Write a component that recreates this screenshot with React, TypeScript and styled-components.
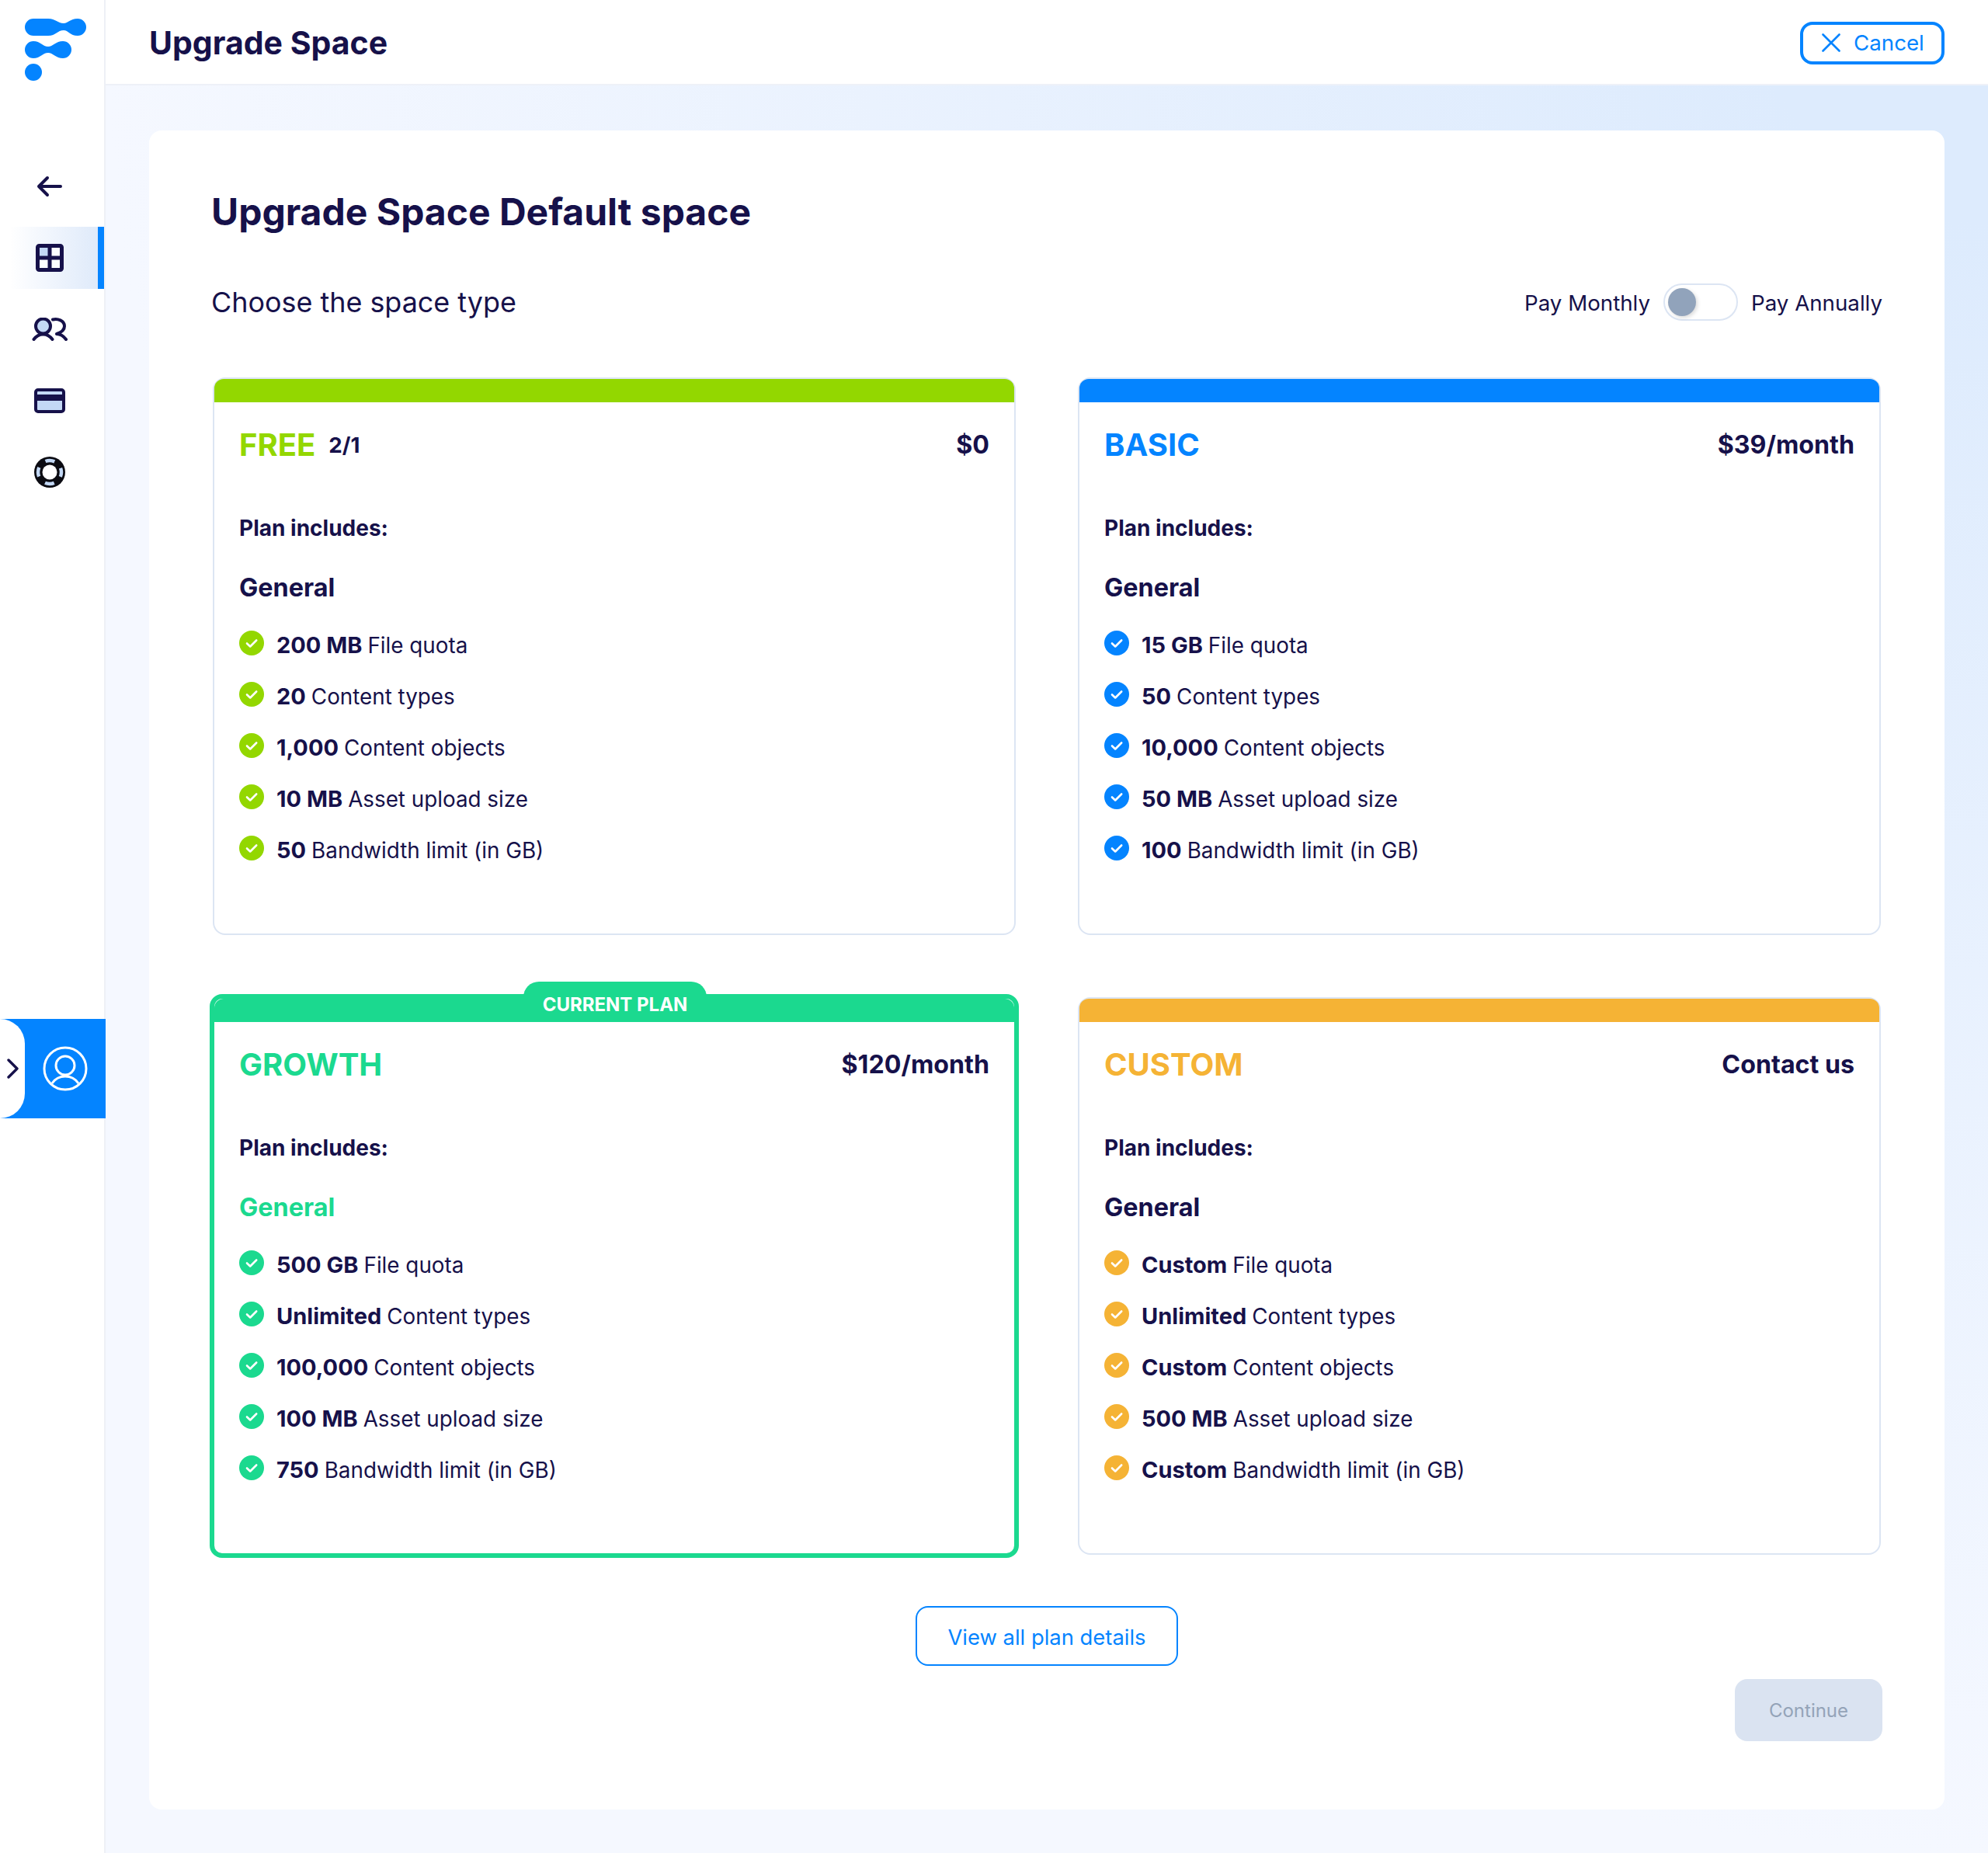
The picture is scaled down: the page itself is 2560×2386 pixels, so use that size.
import React from "react";
import styled, { createGlobalStyle } from "styled-components";

const Global = createGlobalStyle`
  html, body { margin: 0; padding: 0; background: #f5f8ff; }
  body { font-family: Inter, "Liberation Sans", sans-serif; color: #16114a; }
  * { box-sizing: border-box; }
`;

const Page = styled.div`
  display: flex; width: 2560px; height: 2386px;
`;
const Sidebar = styled.aside`
  position: relative; width: 136px; flex: none; background: #fff; border-right: 2px solid #eef0f6;
  display: flex; flex-direction: column;
`;
const LogoBox = styled.div`height: 200px; flex: none; line-height: 0;`;
const Nav = styled.nav`display: flex; flex-direction: column; gap: 12px;`;
const NavItem = styled.div<{ $active?: boolean }>`
  height: 80px; display: flex; align-items: center; justify-content: center; padding-right: 6px;
  ${p => p.$active ? `background: linear-gradient(90deg, #ffffff 10%, #dfeafa 100%); border-right: 8px solid #0484ff; padding-right: 0; padding-left: 2px;` : ""}
`;
const ProfileTab = styled.div`
  position: absolute; left: 0; top: 1312px; width: 136px; height: 128px; background: #0484ff;
  display: flex; align-items: center;
`;
const TabHandle = styled.div`
  width: 32px; height: 128px; background: #fff; border-radius: 0 32px 32px 0;
  display: flex; align-items: center; justify-content: center; padding-left: 2px;
`;
const ProfileIcon = styled.div`margin-left: 23px; line-height: 0;`;

const Main = styled.div`
  flex: 1; min-width: 0; display: flex; flex-direction: column;
  background: radial-gradient(ellipse 100% 100% at 100% 0, #ddebfd 12%, #f5f8ff 100%);
`;
const Header = styled.header`
  height: 110px; flex: none; background: #fff; box-shadow: inset 0 -2px 0 #eef1f8;
  display: flex; align-items: center; justify-content: space-between; padding: 0 56px;
`;
const HeaderTitle = styled.h1`margin: 0; font-size: 41px; font-weight: 700; color: #16114a;`;
const CancelButton = styled.button`
  width: 186px; height: 55px; border: 4px solid #0484ff; border-radius: 16px; background: #fff;
  color: #0484ff; font: 400 27.7px Inter, sans-serif; display: flex; align-items: center; gap: 17px; padding: 0 0 0 24px;
`;
const PanelWrap = styled.div`padding: 58px 56px 56px;`;
const Panel = styled.section`
  height: 2162px; background: #fff; border-radius: 16px; padding: 0 80px;
  display: flex; flex-direction: column;
`;
const PageTitle = styled.h2`
  margin: 76px 0 0; height: 58px; line-height: 58px; font-size: 48px; font-weight: 700; color: #16114a;
`;
const ChooseRow = styled.div`
  margin-top: 57px; height: 60px; display: flex; align-items: center; justify-content: space-between;
`;
const Choose = styled.div`font-size: 35.9px; font-weight: 400; color: #16114a;`;
const Billing = styled.div`
  display: flex; align-items: center; gap: 17px; font-size: 27.7px; color: #16114a;
  span { padding-top: 2px; }
`;
const Toggle = styled.div`
  width: 96px; height: 48px; border: 2px solid #dce5f3; border-radius: 24px; padding: 4px; background: #fff;
`;
const Knob = styled.div`
  width: 36px; height: 36px; border-radius: 50%; background: #91a3bb; box-shadow: 2px 2px 5px rgba(0,0,0,.15);
`;
const Grid = styled.div`
  margin-top: 67px; padding: 0 2px; display: grid; grid-template-columns: 1034px 1034px; grid-auto-rows: 718px; gap: 80px;
`;
const Card = styled.article<{ $featured?: boolean; $color: string }>`
  position: relative; display: flex; flex-direction: column; background: #fff;
  border: ${p => p.$featured ? `6px solid ${p.$color}` : "2px solid #dce5f3"};
  border-radius: 16px;
  margin: ${p => p.$featured ? "-4px" : "0"};
`;
const Band = styled.div<{ $color: string }>`
  height: 30px; flex: none; background: ${p => p.$color}; border-radius: 12px 12px 0 0;
`;
const Badge = styled.div<{ $color: string }>`
  position: absolute; left: 398px; top: -22px; width: 236px; height: 52px; padding-top: 15px; text-align: center;
  background: ${p => p.$color}; border-radius: 20px 20px 0 0; color: #fff; font-size: 24px; font-weight: 700; line-height: 29px;
`;
const CardBody = styled.div`padding: 32px 32px 0; display: flex; flex-direction: column;`;
const CardHead = styled.div`height: 44px; display: flex; align-items: center; justify-content: space-between;`;
const PlanName = styled.div`display: flex; align-items: center; gap: 17px;`;
const Name = styled.span<{ $color: string }>`font-size: 40px; font-weight: 700; color: ${p => p.$color};`;
const Count = styled.span`font-size: 27.7px; font-weight: 700; color: #16114a; margin-top: 2px;`;
const Price = styled.div`font-size: 32.2px; font-weight: 700; color: #16114a;`;
const Includes = styled.div`margin-top: 68px; height: 36px; line-height: 36px; font-size: 28px; font-weight: 700;`;
const Section = styled.div<{ $color?: string }>`
  margin-top: 38px; height: 40px; line-height: 42px; font-size: 32.4px; font-weight: 700; color: ${p => p.$color || "#16114a"};
`;
const List = styled.ul`margin: 19px 0 0; padding: 0; list-style: none;`;
const Item = styled.li`
  height: 66px; display: flex; align-items: center; gap: 16px; font-size: 27.8px; font-weight: 400;
  span { padding-top: 4px; }
  b { font-size: 29px; font-weight: 650; margin-right: 7px; }
`;
const ViewRow = styled.div`margin-top: 66px; display: flex; justify-content: center;`;
const ViewButton = styled.button`
  width: 338px; height: 77px; border: 2px solid #0484ff; border-radius: 16px; background: #fff;
  color: #0484ff; font: 400 27.4px Inter, sans-serif; padding: 2px 0 0;
`;
const ContinueRow = styled.div`margin-top: 17px; display: flex; justify-content: flex-end;`;
const ContinueButton = styled.button`
  width: 190px; height: 80px; border: 0; border-radius: 16px; background: #dae3f1; color: #94a3b8;
  font: 400 24px Inter, sans-serif; padding: 0;
`;

const Check = ({ color }: { color: string }) => (
  <svg width="32" height="32" viewBox="0 0 32 32" style={{ flex: "none" }}>
    <circle cx="16" cy="16" r="16" fill={color} />
    <path d="M10 16.5l4.2 4 8-8" fill="none" stroke="#fff" strokeWidth="2.6" strokeLinecap="round" strokeLinejoin="round" />
  </svg>
);

const Logo = () => (
  <svg width="136" height="120" viewBox="0 0 136 120" fill="#0484ff">
    <path d="M43 24H62C72 24 74 30 82 30C88 30 90 24 100 24A11 11 0 0 1 100 46C90 46 88 39 82 39C74 39 72 46 62 46H43A11 11 0 0 1 43 24Z" />
    <path d="M43 53C52 53 55 60 62 60C68 60 72 53 81 53A11 11 0 0 1 81 75C72 75 68 68 62 68C55 68 52 75 43 75A11 11 0 0 1 43 53Z" />
    <ellipse cx="43" cy="93" rx="11" ry="11" />
  </svg>
);

const ink = "#16114a";
const tint = "#c3d8f5";

const ArrowIcon = () => (
  <svg width="34" height="28" viewBox="0 0 34 28" fill="none" stroke={ink} strokeWidth="4" strokeLinecap="round" strokeLinejoin="round">
    <path d="M31 14H3M14 3L3 14l11 11" />
  </svg>
);
const GridIcon = () => (
  <svg width="36" height="36" viewBox="0 0 36 36">
    <rect x="2" y="2" width="32" height="32" rx="2" fill="#fff" fillOpacity=".75" />
    <rect x="2" y="2" width="16" height="16" fill={tint} />
    <path d="M4.5 2.5h27a2 2 0 0 1 2 2v27a2 2 0 0 1-2 2h-27a2 2 0 0 1-2-2v-27a2 2 0 0 1 2-2zM18 2v32M2 18h32" fill="none" stroke={ink} strokeWidth="5" />
  </svg>
);
const UsersIcon = () => (
  <svg width="46" height="30" viewBox="0 0 46 30" fill="none" stroke={ink} strokeWidth="4" strokeLinecap="round" strokeLinejoin="round">
    <circle cx="14.5" cy="11" r="9.5" fill={tint} />
    <path d="M2.5 28c3-4 7-6.5 12-6.5s9 2.5 12 6.5" />
    <path d="M27 2.5c6-1.500 15 1 15 8.500 0 5-4 8-10 10 5 0 9 3 12 7" />
  </svg>
);
const CardIcon = () => (
  <svg width="40" height="32" viewBox="0 0 40 32">
    <rect x="2" y="2" width="36" height="28" rx="3" fill={tint} stroke={ink} strokeWidth="4" />
    <rect x="2" y="8" width="36" height="8" fill={ink} />
  </svg>
);
const HelpIcon = () => (
  <svg width="40" height="40" viewBox="0 0 40 40">
    <circle cx="20" cy="20" r="20" fill="#0b0b12" />
    <circle cx="20" cy="20" r="15" fill="none" stroke={tint} strokeWidth="4.5" strokeDasharray="12 11.56" strokeDashoffset="6" />
    <circle cx="20" cy="20" r="9.5" fill="#fff" />
  </svg>
);
const Chevron = () => (
  <svg width="16" height="26" viewBox="0 0 16 26" fill="none" stroke={ink} strokeWidth="3.4" strokeLinecap="round" strokeLinejoin="round">
    <path d="M2 2l11 11L2 24" />
  </svg>
);
const ProfileGlyph = () => (
  <svg width="58" height="58" viewBox="0 0 58 58" fill="none" stroke="#fff" strokeWidth="3">
    <circle cx="29" cy="29" r="27" />
    <circle cx="29" cy="25" r="12" />
    <path d="M12 48c4-6 10-9 17-9s13 3 17 9" />
  </svg>
);
const CloseIcon = () => (
  <svg width="24" height="24" viewBox="0 0 24 24" fill="none" stroke="#0484ff" strokeWidth="2.6" strokeLinecap="round">
    <path d="M1.5 1.5l21 21M22.5 1.5l-21 21" />
  </svg>
);

type Feature = [string, string];
interface Plan {
  name: string; color: string; price: string; count?: string; featured?: boolean; features: Feature[];
}
const label = ["File quota", "Content types", "Content objects", "Asset upload size", "Bandwidth limit (in GB)"];
const plans: Plan[] = [
  { name: "FREE", count: "2/1", color: "#93d700", price: "$0", features: ["200 MB", "20", "1,000", "10 MB", "50"].map((v, i) => [v, label[i]] as Feature) },
  { name: "BASIC", color: "#0484ff", price: "$39/month", features: ["15 GB", "50", "10,000", "50 MB", "100"].map((v, i) => [v, label[i]] as Feature) },
  { name: "GROWTH", color: "#1bd98f", price: "$120/month", featured: true, features: ["500 GB", "Unlimited", "100,000", "100 MB", "750"].map((v, i) => [v, label[i]] as Feature) },
  { name: "CUSTOM", color: "#f5b335", price: "Contact us", features: ["Custom", "Unlimited", "Custom", "500 MB", "Custom"].map((v, i) => [v, label[i]] as Feature) },
];

export default function App() {
  return (
    <Page>
      <Global />
      <Sidebar>
        <LogoBox><Logo /></LogoBox>
        <Nav>
          <NavItem><ArrowIcon /></NavItem>
          <NavItem $active><GridIcon /></NavItem>
          <NavItem><UsersIcon /></NavItem>
          <NavItem><CardIcon /></NavItem>
          <NavItem><HelpIcon /></NavItem>
        </Nav>
        <ProfileTab>
          <TabHandle><Chevron /></TabHandle>
          <ProfileIcon><ProfileGlyph /></ProfileIcon>
        </ProfileTab>
      </Sidebar>
      <Main>
        <Header>
          <HeaderTitle>Upgrade Space</HeaderTitle>
          <CancelButton><CloseIcon />Cancel</CancelButton>
        </Header>
        <PanelWrap>
          <Panel>
            <PageTitle>Upgrade Space Default space</PageTitle>
            <ChooseRow>
              <Choose>Choose the space type</Choose>
              <Billing>
                <span>Pay Monthly</span>
                <Toggle><Knob /></Toggle>
                <span>Pay Annually</span>
              </Billing>
            </ChooseRow>
            <Grid>
              {plans.map(plan => (
                <Card key={plan.name} $color={plan.color} $featured={plan.featured}>
                  <Band $color={plan.color} />
                  {plan.featured && <Badge $color={plan.color}>CURRENT PLAN</Badge>}
                  <CardBody>
                    <CardHead>
                      <PlanName>
                        <Name $color={plan.color}>{plan.name}</Name>
                        {plan.count && <Count>{plan.count}</Count>}
                      </PlanName>
                      <Price>{plan.price}</Price>
                    </CardHead>
                    <Includes>Plan includes:</Includes>
                    <Section $color={plan.featured ? plan.color : undefined}>General</Section>
                    <List>
                      {plan.features.map(([value, text]) => (
                        <Item key={text}>
                          <Check color={plan.color} />
                          <span><b>{value}</b>{text}</span>
                        </Item>
                      ))}
                    </List>
                  </CardBody>
                </Card>
              ))}
            </Grid>
            <ViewRow><ViewButton>View all plan details</ViewButton></ViewRow>
            <ContinueRow><ContinueButton>Continue</ContinueButton></ContinueRow>
          </Panel>
        </PanelWrap>
      </Main>
    </Page>
  );
}
